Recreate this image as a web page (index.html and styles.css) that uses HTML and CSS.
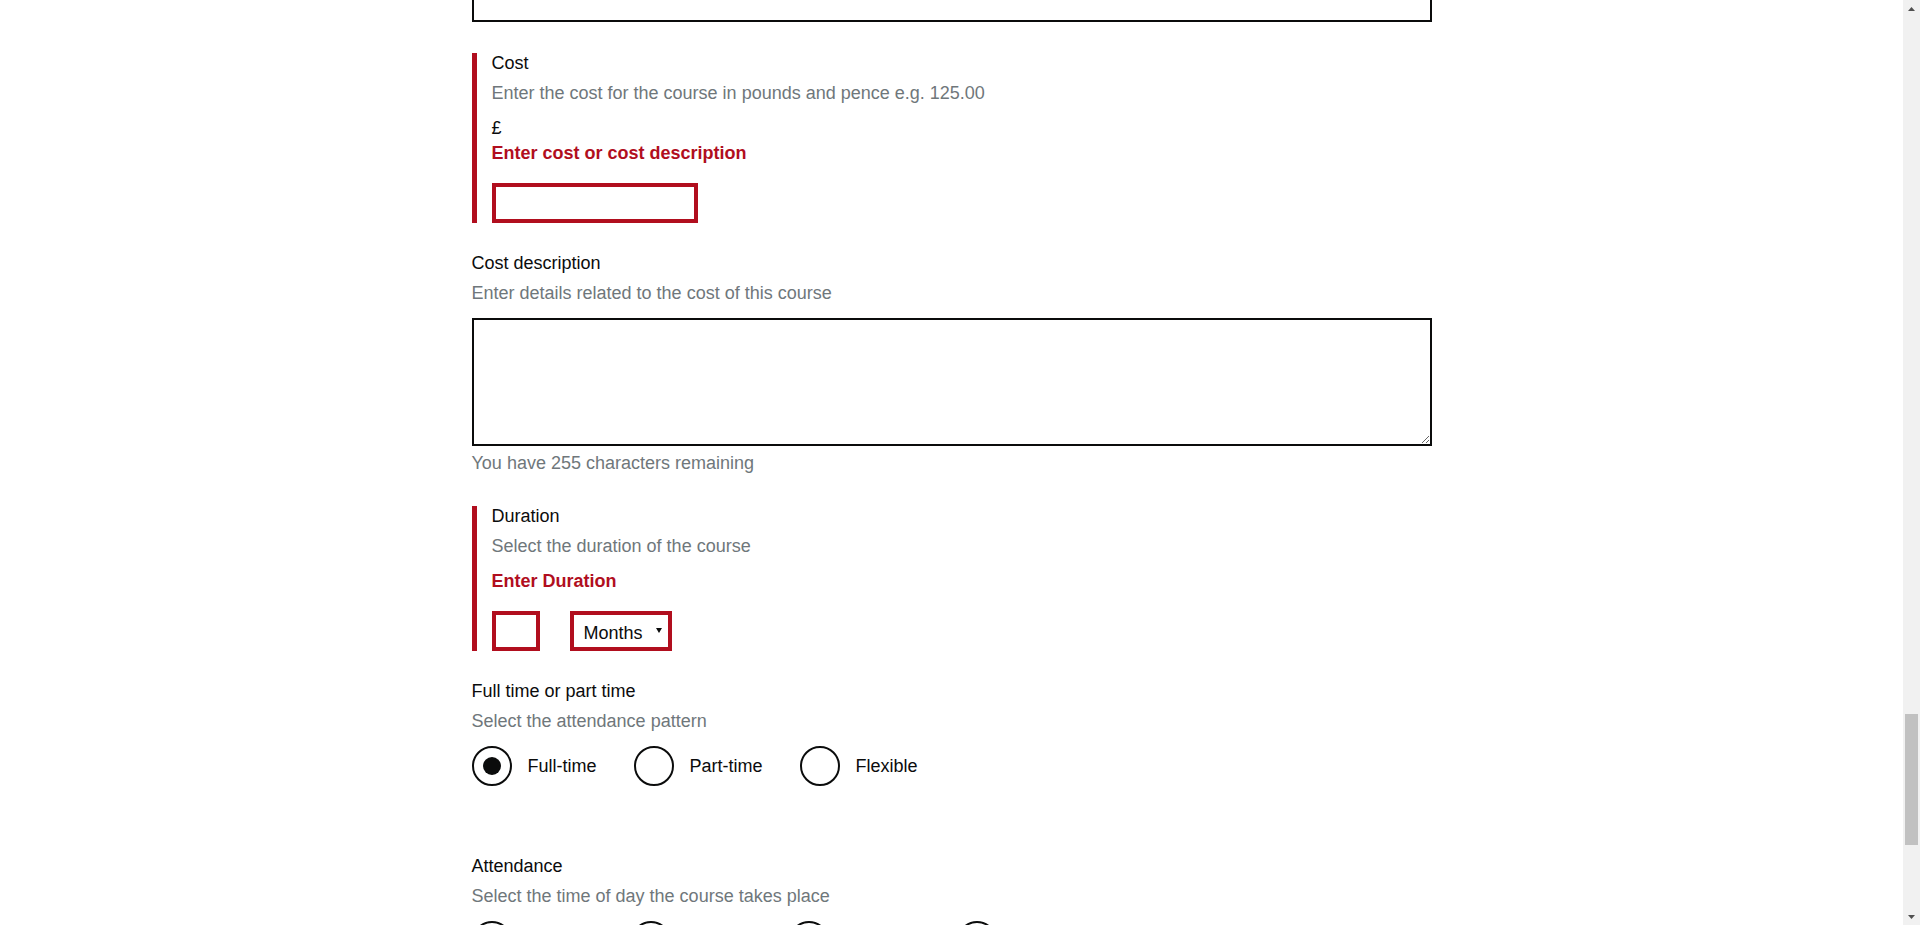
FILE: index.html
```html
<!DOCTYPE html>
<html lang="en">
<head>
<meta charset="utf-8">
<title>Course details</title>
<link rel="stylesheet" href="styles.css">
</head>
<body>
<div class="page">
  <div class="viewport">
    <main class="container">
      <div class="prev-field"></div>

      <div class="form-group form-group-error">
        <label class="label" for="cost">Cost</label>
        <span class="hint">Enter the cost for the course in pounds and pence e.g. 125.00</span>
        <span class="prefix">£</span>
        <span class="error-message">Enter cost or cost description</span>
        <input class="input input-error input-cost" id="cost" type="text">
      </div>

      <div class="form-group form-group-desc">
        <label class="label" for="cost-desc">Cost description</label>
        <span class="hint">Enter details related to the cost of this course</span>
        <textarea class="textarea" id="cost-desc"></textarea>
        <span class="count">You have 255 characters remaining</span>
      </div>

      <div class="form-group form-group-error">
        <label class="label" for="duration">Duration</label>
        <span class="hint">Select the duration of the course</span>
        <span class="error-message error-spaced">Enter Duration</span>
        <div class="duration-row">
          <input class="input input-error input-duration" id="duration" type="text">
          <div class="select-wrap">
            <select class="select input-error">
              <option>Months</option>
              <option>Weeks</option>
              <option>Years</option>
            </select>
            <svg class="caret" width="6" height="5" viewBox="0 0 6 5"><path d="M0 0H6L3 5Z" fill="#0b0c0c"/></svg>
          </div>
        </div>
      </div>

      <div class="form-group form-group-radios">
        <span class="label">Full time or part time</span>
        <span class="hint">Select the attendance pattern</span>
        <div class="radios">
          <div class="radio"><span class="radio-circle"><span class="radio-dot"></span></span><span class="radio-text">Full-time</span></div>
          <div class="radio"><span class="radio-circle"></span><span class="radio-text">Part-time</span></div>
          <div class="radio"><span class="radio-circle"></span><span class="radio-text">Flexible</span></div>
        </div>
      </div>

      <div class="form-group">
        <span class="label">Attendance</span>
        <span class="hint">Select the time of day the course takes place</span>
        <div class="radios">
          <div class="radio"><span class="radio-circle"></span><span class="radio-text">Daytime</span></div>
          <div class="radio"><span class="radio-circle"></span><span class="radio-text">Evening</span></div>
          <div class="radio"><span class="radio-circle"></span><span class="radio-text">Weekend</span></div>
          <div class="radio"><span class="radio-circle"></span><span class="radio-text">Day/Block Release</span></div>
        </div>
      </div>
    </main>
  </div>
  <div class="scrollbar">
    <div class="sb-button"><svg width="7" height="4" viewBox="0 0 7 4"><path d="M3.5 0L7 4H0Z" fill="#505050"/></svg></div>
    <div class="sb-track"><div class="sb-thumb"></div></div>
    <div class="sb-button"><svg width="7" height="4" viewBox="0 0 7 4"><path d="M0 0H7L3.5 4Z" fill="#505050"/></svg></div>
  </div>
</div>
</body>
</html>
```

FILE: styles.css
```css
html, body {
  margin: 0;
  padding: 0;
  height: 100%;
  overflow: hidden;
  background: #ffffff;
}

body {
  font-family: "Liberation Sans", Arial, sans-serif;
  font-size: 18px;
  color: #0b0c0c;
}

.page {
  display: flex;
  height: 100vh;
}

.viewport {
  flex: 1;
  overflow: hidden;
}

.container {
  width: 960px;
  margin: 0 auto;
}

.prev-field {
  height: 22px;
  box-sizing: border-box;
  border: 2px solid #0b0c0c;
  border-top: 0;
  margin-bottom: 31px;
}

.form-group {
  margin-bottom: 30px;
}

.form-group-error {
  border-left: 5px solid #b10e1e;
  padding-left: 15px;
}

.label {
  display: block;
  line-height: 21px;
  color: #0b0c0c;
}

.hint {
  display: block;
  margin-top: 7px;
  line-height: 25px;
  color: #6f777b;
}

.prefix {
  display: block;
  margin-top: 10px;
  line-height: 25px;
}

.error-message {
  display: block;
  line-height: 25px;
  font-weight: bold;
  color: #b10e1e;
}

.error-spaced {
  margin-top: 10px;
}

.input {
  display: block;
  box-sizing: border-box;
  height: 40px;
  margin: 17px 0 0;
  padding: 4px 8px;
  border: 2px solid #0b0c0c;
  border-radius: 0;
  font: inherit;
  background: #ffffff;
  outline: none;
}

.input-error {
  border: 4px solid #b10e1e;
}

.input-cost {
  width: 206px;
}

.input-duration {
  width: 48px;
  margin: 0;
}

.textarea {
  display: block;
  box-sizing: border-box;
  width: 100%;
  height: 128px;
  margin: 12px 0 0;
  padding: 4px;
  border: 2px solid #0b0c0c;
  border-radius: 0;
  font: inherit;
  resize: both;
  outline: none;
}

.count {
  display: block;
  margin: 5px 0 1px;
  line-height: 25px;
  color: #6f777b;
}

.duration-row {
  display: flex;
  gap: 30px;
  margin-top: 17px;
}

.select-wrap {
  position: relative;
  width: 102px;
  height: 40px;
}

.select {
  appearance: none;
  -webkit-appearance: none;
  box-sizing: border-box;
  width: 100%;
  height: 40px;
  margin: 0;
  padding: 3px 0 0 10px;
  border-radius: 0;
  background: #ffffff;
  font: inherit;
  color: #0b0c0c;
  outline: none;
}

.caret {
  position: absolute;
  right: 10px;
  top: 17px;
}

.form-group-radios {
  margin-bottom: 70px;
}

.radios {
  display: flex;
  margin-top: 12px;
}

.radio {
  display: flex;
  align-items: center;
  margin-right: 37px;
}

.radio-circle {
  display: flex;
  align-items: center;
  justify-content: center;
  box-sizing: border-box;
  width: 40px;
  height: 40px;
  border: 2px solid #0b0c0c;
  border-radius: 50%;
}

.radio-dot {
  width: 18px;
  height: 18px;
  border-radius: 50%;
  background: #0b0c0c;
}

.radio-text {
  margin-left: 16px;
  line-height: 25px;
}

.scrollbar {
  display: flex;
  flex-direction: column;
  width: 17px;
  background: #f1f1f1;
}

.sb-button {
  display: flex;
  align-items: center;
  justify-content: center;
  height: 17px;
}

.sb-track {
  flex: 1;
}

.sb-thumb {
  height: 131px;
  margin: 697px 2px 0 2px;
  background: #c1c1c1;
}
```
